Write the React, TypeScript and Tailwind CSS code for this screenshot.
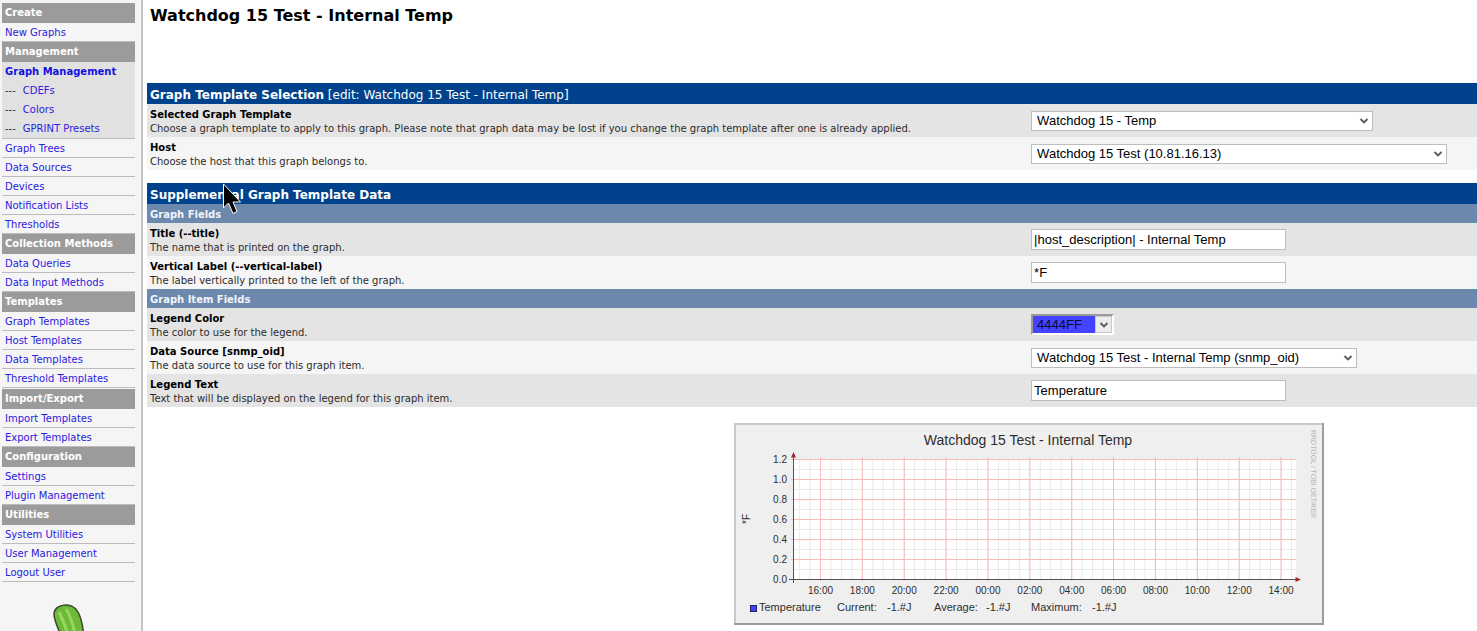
import React from "react";

type NavItem = { label: string; sub?: string[]; active?: boolean };
type NavGroup = { title: string; items: NavItem[] };

const groups: NavGroup[] = [
  { title: "Create", items: [{ label: "New Graphs" }] },
  {
    title: "Management",
    items: [
      { label: "Graph Management", active: true, sub: ["CDEFs", "Colors", "GPRINT Presets"] },
      { label: "Graph Trees" },
      { label: "Data Sources" },
      { label: "Devices" },
      { label: "Notification Lists" },
      { label: "Thresholds" },
    ],
  },
  { title: "Collection Methods", items: [{ label: "Data Queries" }, { label: "Data Input Methods" }] },
  {
    title: "Templates",
    items: [
      { label: "Graph Templates" },
      { label: "Host Templates" },
      { label: "Data Templates" },
      { label: "Threshold Templates" },
    ],
  },
  { title: "Import/Export", items: [{ label: "Import Templates" }, { label: "Export Templates" }] },
  { title: "Configuration", items: [{ label: "Settings" }, { label: "Plugin Management" }] },
  {
    title: "Utilities",
    items: [{ label: "System Utilities" }, { label: "User Management" }, { label: "Logout User" }],
  },
];

function Sidebar() {
  return (
    <aside className="flex w-[143px] shrink-0 flex-col overflow-hidden border-r-2 border-[#c4c4c4] bg-[#f5f5f5] pt-[3px] pr-1.5 pl-0.5">
      <nav className="text-[10px] leading-5 text-[#2a20e0]">
        {groups.map((g) => (
          <section key={g.title}>
            <h2 className="h-5 bg-[#9b9b9b] px-[3px] font-bold text-white">{g.title}</h2>
            <ul className={g.items.length === 4 ? "pb-px" : ""}>
              {g.items.map((item) => (
                <li
                  key={item.label}
                  className={
                    item.active
                      ? "border-b border-[#bcbcbc] bg-[#e1e1e1]"
                      : "h-[19px] border-b border-[#bcbcbc] px-[3px]"
                  }
                >
                  {item.sub ? (
                    <>
                      <a href="#graphs" className="block h-[19px] px-[3px] font-bold text-[#1510e0]">
                        {item.label}
                      </a>
                      <ul>
                        {item.sub.map((s) => (
                          <li key={s} className="flex h-[19px] gap-[7px] px-[3px] text-[#333333]">
                            <span>---</span>
                            <a href="#sub" className="text-[#2a20e0]">{s}</a>
                          </li>
                        ))}
                      </ul>
                    </>
                  ) : (
                    <a href="#page" className="block">{item.label}</a>
                  )}
                </li>
              ))}
            </ul>
          </section>
        ))}
      </nav>
      <svg className="mt-5 ml-[45px] h-[48px] w-[50px] shrink-0" viewBox="0 0 50 48" aria-hidden="true">
        <path d="M7 12C7 2 25 -1 31 10C36 19 37 34 38 48H20C15 34 7 21 7 12Z" fill="#6dba3a" stroke="#3c4a2c" strokeWidth="1.5" />
        <path d="M12 10C17 20 22 34 25 48M19 7C26 18 29 34 31 48" stroke="#97d75b" strokeWidth="3" fill="none" />
      </svg>
    </aside>
  );
}

const control = "border border-[#bdbdbd] bg-white text-[13px] leading-[17px] text-black outline-none";

function Chevron() {
  return (
    <svg className="h-2 w-2.5" viewBox="0 0 10 8" aria-hidden="true">
      <path d="M1.5 2L5 5.500L8.500 2" fill="none" stroke="#5a5a5a" strokeWidth="1.8" />
    </svg>
  );
}

function Select({ id, value, width }: { id: string; value: string; width: string }) {
  return (
    <div className={"relative " + width}>
      <select id={id} className={"block h-5 w-full appearance-none rounded-none pl-[5px] font-['Liberation_Sans',Arial,sans-serif] " + control}>
        <option>{value}</option>
      </select>
      <span className="pointer-events-none absolute inset-y-0 right-1 flex items-center">
        <Chevron />
      </span>
    </div>
  );
}

function TextBox({ id, value }: { id: string; value: string }) {
  return (
    <input
      id={id}
      type="text"
      defaultValue={value}
      className={"h-[21px] w-[255px] px-0.5 font-['Liberation_Sans',Arial,sans-serif] " + control}
    />
  );
}

function Row({ id, label, hint, shade, children }: { id: string; label: string; hint: string; shade?: boolean; children: React.ReactNode }) {
  return (
    <div className={"flex h-[33px] " + (shade ? "bg-[#e4e4e4]" : "bg-[#f5f5f5]")}>
      <div className="w-[66.4%] shrink-0 pt-1 pl-[3px] text-[10px] leading-[14px] whitespace-nowrap">
        <label htmlFor={id} className="block font-bold text-black">{label}</label>
        <p className="text-[#2c2c2c]">{hint}</p>
      </div>
      <div className="flex items-center pl-px">{children}</div>
    </div>
  );
}

function Bar({ children }: { children: React.ReactNode }) {
  return <h2 className="h-[21px] bg-[#00438c] pl-[3px] text-[12px] leading-6 text-white">{children}</h2>;
}

function SubBar({ children }: { children: React.ReactNode }) {
  return <h3 className="h-[19px] bg-[#6d88ad] pl-[3px] text-[10px] leading-[21px] font-bold text-[#f2f5fa]">{children}</h3>;
}

const hours = ["16:00", "18:00", "20:00", "22:00", "00:00", "02:00", "04:00", "06:00", "08:00", "10:00", "12:00", "14:00"];
const levels = ["1.2", "1.0", "0.8", "0.6", "0.4", "0.2", "0.0"];

function Graph() {
  const minorX = Array.from({ length: 48 }, (_, i) => 65.500 + i * 10.4675).filter((x) => x < 562);
  return (
    <svg
      role="img"
      aria-label="Watchdog 15 Test - Internal Temp"
      className="ml-[44.1%] block h-[202px] w-[590px] font-['Liberation_Sans',Arial,sans-serif]"
      viewBox="0 0 590 202"
      fill="#2e2e2e"
    >
      <rect width="590" height="202" fill="#efefef" />
      <path d="M0 1H589M1 0V201" stroke="#c9c9c9" strokeWidth="2" />
      <path d="M0 201H590M589 0V202" stroke="#9c9c9c" strokeWidth="2" />
      <rect x="59" y="36" width="503" height="120" fill="#ffffff" />
      {minorX.map((x) => (
        <line key={x} x1={x} x2={x} y1="34" y2="156" stroke="#e8ebe8" />
      ))}
      {levels.slice(1).map((l, i) => (
        <rect key={l} x="59" y={46 + i * 20} width="503" height="1" fill="#e6ebe8" />
      ))}
      {hours.map((h, i) => (
        <line key={h} x1={86.5 + i * 41.87} x2={86.5 + i * 41.87} y1="34" y2="158" stroke="#f6bcbc" />
      ))}
      {levels.map((l, i) => (
        <rect key={l} x="57" y={36 + i * 20} width="505" height="1" fill="#f6bcbc" />
      ))}
      {hours.map((h, i) => (
        <text key={h} x={86.5 + i * 41.87} y="171" fontSize="10" textAnchor="middle">{h}</text>
      ))}
      {levels.map((l, i) => (
        <text key={l} x="53" y={40 + i * 20} fontSize="10" textAnchor="end">{l}</text>
      ))}
      <path d="M59.500 34V160M55 156.500H564" stroke="#565050" />
      <path d="M59.500 29L62 34.500H57ZM567 156.500L561.500 154V159Z" fill="#9c2a2a" />
      <text x="294" y="22" fontSize="14" textAnchor="middle">Watchdog 15 Test - Internal Temp</text>
      <text transform="translate(16 101) rotate(-90)" fontSize="10">*F</text>
      <text transform="translate(577 7) rotate(90)" fontSize="7" fill="#b4b4b4">RRDTOOL / TOBI OETIKER</text>
      <rect x="16.500" y="182.500" width="6" height="6" fill="#4444ff" stroke="#22225a" />
      <g fontSize="11">
        <text x="25" y="188">Temperature</text>
        <text x="103" y="188">Current:</text>
        <text x="153" y="188">-1.#J</text>
        <text x="200" y="188">Average:</text>
        <text x="252" y="188">-1.#J</text>
        <text x="297" y="188">Maximum:</text>
        <text x="358" y="188">-1.#J</text>
      </g>
    </svg>
  );
}

export default function App() {
  return (
    <div className="relative flex h-screen overflow-hidden bg-white font-['DejaVu_Sans',Verdana,sans-serif]">
      <Sidebar />
      <main className="min-w-0 flex-1 pl-1">
        <h1 className="h-[83px] pt-1.5 pl-[3px] text-[16px] leading-5 font-bold text-black">Watchdog 15 Test - Internal Temp</h1>
        <form>
          <section className="mb-[13px]">
            <Bar>
              <strong>Graph Template Selection</strong> [edit: Watchdog 15 Test - Internal Temp]
            </Bar>
            <Row id="template" label="Selected Graph Template" hint="Choose a graph template to apply to this graph. Please note that graph data may be lost if you change the graph template after one is already applied." shade>
              <Select id="template" value="Watchdog 15 - Temp" width="w-[342px]" />
            </Row>
            <Row id="host" label="Host" hint="Choose the host that this graph belongs to.">
              <Select id="host" value="Watchdog 15 Test (10.81.16.13)" width="w-[416px]" />
            </Row>
          </section>
          <section className="mb-4">
            <Bar>
              <strong>Supplemental Graph Template Data</strong>
            </Bar>
            <SubBar>Graph Fields</SubBar>
            <Row id="title" label="Title (--title)" hint="The name that is printed on the graph." shade>
              <TextBox id="title" value="|host_description| - Internal Temp" />
            </Row>
            <Row id="vlabel" label="Vertical Label (--vertical-label)" hint="The label vertically printed to the left of the graph.">
              <TextBox id="vlabel" value="*F" />
            </Row>
            <SubBar>Graph Item Fields</SubBar>
            <Row id="color" label="Legend Color" hint="The color to use for the legend." shade>
              <div className="relative">
                <select
                  id="color"
                  className="block h-[21px] w-[83px] appearance-none rounded-none border-2 border-t-[#9a9a9a] border-r-white border-b-white border-l-[#9a9a9a] bg-[#4444ff] pl-1 font-['Liberation_Sans',Arial,sans-serif] text-[13px] leading-[17px] text-[#0a0a30]"
                >
                  <option>4444FF</option>
                </select>
                <span className="pointer-events-none absolute top-0.5 right-0.5 flex h-[17px] w-[17px] items-center justify-center border border-[#c8c8c8] bg-[#ececec]">
                  <Chevron />
                </span>
              </div>
            </Row>
            <Row id="source" label="Data Source [snmp_oid]" hint="The data source to use for this graph item.">
              <Select id="source" value="Watchdog 15 Test - Internal Temp (snmp_oid)" width="w-[326px]" />
            </Row>
            <Row id="legend" label="Legend Text" hint="Text that will be displayed on the legend for this graph item." shade>
              <TextBox id="legend" value="Temperature" />
            </Row>
          </section>
        </form>
        <Graph />
      </main>
      <svg className="pointer-events-none absolute top-[183px] left-[222px] h-8 w-5" viewBox="0 0 20 32" aria-hidden="true">
        <path d="M1.500 1V25L6.500 20L11 30.500L15 28.500L11 19H18.500Z" fill="#000" stroke="#fff" />
      </svg>
    </div>
  );
}
